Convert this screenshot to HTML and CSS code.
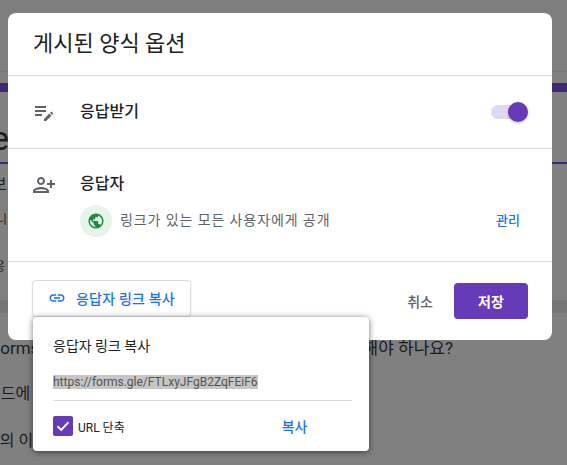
FILE: index.html
```html
<!DOCTYPE html>
<html lang="ko">
<head>
<meta charset="UTF-8">
<meta name="viewport" content="width=device-width, initial-scale=1.0">
<title>게시된 양식 옵션</title>
<link rel="stylesheet" href="styles.css">
</head>
<body>

<!-- page behind the scrim, mostly covered -->
<div class="page">
    <div class="page-header"></div>
    <div class="page-accent"></div>
    <div class="page-title">e</div>
    <div class="page-rule"></div>
    <div class="page-tab">보</div>
    <div class="page-note">니</div>
    <div class="page-small">응</div>
    <div class="page-band"></div>
    <p class="question"><span>Forms</span><span>해야 하나요?</span></p>
    <p class="answer">필드에</p>
    <p class="answer answer-last">사의 이</p>
</div>

<div class="dialog">
    <h2 class="dialog-title">게시된 양식 옵션</h2>

    <div class="row row-accept">
        <svg class="row-icon" viewBox="0 0 24 24"><path d="M3 10h11v2H3zM3 8h11V6H3zM3 16h7v-2H3zM18.01 12.87l.71-.71c.39-.39 1.02-.39 1.41 0l.71.71c.39.39.39 1.02 0 1.41l-.71.71-2.12-2.12zM17.3 13.58l-5.3 5.3V21h2.12l5.3-5.3-2.12-2.12z"/></svg>
        <span class="row-label">응답받기</span>
        <div class="switch"><div class="switch-thumb"></div></div>
    </div>

    <div class="row row-people">
        <svg class="row-icon icon-flip" viewBox="0 0 24 24"><path d="M15 12c2.21 0 4-1.79 4-4s-1.79-4-4-4-4 1.79-4 4 1.79 4 4 4zm0-6c1.1 0 2 .9 2 2s-.9 2-2 2-2-.9-2-2 .9-2 2-2zm0 8c-2.67 0-8 1.34-8 4v2h16v-2c0-2.66-5.33-4-8-4zm-6 4c.22-.65 2.56-1.7 6-1.7 3.45 0 5.78 1.05 6 1.7H9zM6 15v-3h3v-2H6V7H4v3H1v2h3v3z"/></svg>
        <div class="people-body">
            <span class="row-label">응답자</span>
            <div class="access">
                <div class="globe">
                    <svg viewBox="0 0 24 24"><path d="M12 2C6.48 2 2 6.48 2 12s4.48 10 10 10 10-4.48 10-10S17.52 2 12 2zm-1 17.93c-3.95-.49-7-3.85-7-7.93 0-.62.08-1.21.21-1.79L9 15v1c0 1.1.9 2 2 2v1.93zm6.9-2.54c-.26-.81-1-1.39-1.9-1.39h-1v-3c0-.55-.45-1-1-1H8v-2h2c.55 0 1-.45 1-1V7h2c1.1 0 2-.9 2-2v-.41c2.93 1.19 5 4.06 5 7.41 0 2.08-.8 3.97-2.1 5.39z"/></svg>
                </div>
                <span class="access-text">링크가 있는 모든 사용자에게 공개</span>
                <span class="manage">관리</span>
            </div>
        </div>
    </div>

    <div class="dialog-footer">
        <button class="link-btn">
            <svg viewBox="0 0 24 24"><path d="M3.9 12c0-1.71 1.39-3.1 3.1-3.1h4V7H7c-2.76 0-5 2.24-5 5s2.24 5 5 5h4v-1.9H7c-1.71 0-3.1-1.39-3.1-3.1zM8 13h8v-2H8v2zm9-6h-4v1.9h4c1.71 0 3.1 1.39 3.1 3.1s-1.39 3.1-3.1 3.1h-4V17h4c2.76 0 5-2.24 5-5s-2.24-5-5-5z"/></svg>
            응답자 링크 복사
        </button>
        <button class="cancel-btn">취소</button>
        <button class="save-btn">저장</button>
    </div>
</div>

<div class="popup">
    <div class="popup-title">응답자 링크 복사</div>
    <div class="popup-url"><span class="url-text">https://forms.gle/FTLxyJFgB2ZqFEiF6</span></div>
    <div class="popup-actions">
        <div class="checkbox">
            <svg viewBox="0 0 20 20"><path d="M4.5 10.2l3.7 3.7 7.3-7.6" fill="none" stroke="#fff" stroke-width="2"/></svg>
        </div>
        <span class="checkbox-label">URL 단축</span>
        <span class="copy">복사</span>
    </div>
</div>

</body>
</html>
```

FILE: styles.css
```css
* {
    box-sizing: border-box;
}

body {
    margin: 0;
    width: 567px;
    height: 465px;
    overflow: hidden;
    position: relative;
    font-family: Roboto, "Noto Sans CJK KR", sans-serif;
    background-color: #808080;
}

/* page behind the scrim */
.page {
    height: 465px;
    overflow: hidden;
    color: #1c1c1c;
}

.page-header {
    height: 72px;
    background-color: #7e7e7e;
    border-bottom: 1px solid #757575;
}

.page-accent {
    height: 9px;
    margin-top: 11px;
    background-color: #3e2a74;
}

.page-title {
    height: 70px;
    margin-left: -9px;
    font-size: 34px;
    line-height: 92px;
}

.page-rule {
    height: 2px;
    background-color: #392a78;
}

.page-tab {
    height: 34px;
    margin-left: -8px;
    font-size: 16px;
    line-height: 42px;
}

.page-note {
    height: 44px;
    margin-left: -4px;
    font-size: 12px;
    line-height: 44px;
}

.page-small {
    height: 58px;
    margin-left: -6px;
    font-size: 12px;
    line-height: 50px;
}

.page-band {
    height: 13px;
    background-color: #757575;
}

.question {
    display: flex;
    justify-content: space-between;
    width: 462px;
    margin: 23px 0 0 -9px;
    font-size: 17px;
    line-height: 24px;
}

.answer {
    margin: 22px 0 0 -14px;
    font-size: 16px;
    line-height: 24px;
}

.answer-last {
    margin-top: 23px;
    margin-left: -15px;
}

/* main dialog */
.dialog {
    position: absolute;
    top: 13px;
    left: 8px;
    width: 544px;
    height: 327px;
    background-color: #fff;
    border-radius: 8px;
    color: #202124;
}

.dialog-title {
    margin: 0;
    height: 63px;
    padding: 0 25px;
    font-size: 22px;
    font-weight: 400;
    line-height: 62px;
    border-bottom: 1px solid #dadce0;
}

.row {
    display: flex;
    padding: 0 24px;
    border-bottom: 1px solid #dadce0;
}

.row-accept {
    height: 73px;
    align-items: center;
}

.row-people {
    height: 113px;
    padding-top: 24px;
}

.row-icon {
    width: 24px;
    height: 24px;
    margin-right: 24px;
    flex-shrink: 0;
    fill: #5f6368;
}

.icon-flip {
    transform: scaleX(-1);
}

.row-label {
    font-size: 16px;
    font-weight: 500;
    line-height: 22px;
}

.switch {
    position: relative;
    width: 30px;
    height: 14px;
    margin-left: auto;
    margin-right: 7px;
    background-color: #e1d8f1;
    border-radius: 7px;
}

.switch-thumb {
    position: absolute;
    top: -3px;
    right: -7px;
    width: 20px;
    height: 20px;
    background-color: #673ab7;
    border-radius: 50%;
    box-shadow: 0 1px 3px rgba(0, 0, 0, 0.25);
}

.people-body {
    flex: 1;
}

.access {
    display: flex;
    align-items: center;
    height: 32px;
    margin-top: 10px;
    padding-right: 8px;
    line-height: 31px;
}

.globe {
    display: flex;
    align-items: center;
    justify-content: center;
    width: 32px;
    height: 32px;
    margin-right: 8px;
    background-color: #e6f4ea;
    border-radius: 50%;
}

.globe svg {
    width: 18px;
    height: 18px;
    fill: #1e8e3e;
}

.access-text {
    height: 32px;
    font-size: 14px;
    letter-spacing: 0.9px;
    color: #5f6368;
}

.manage {
    height: 32px;
    margin-left: auto;
    font-size: 13px;
    font-weight: 500;
    color: #1a73e8;
}

.dialog-footer {
    display: flex;
    align-items: center;
    height: 78px;
    padding: 0 24px;
}

.dialog-footer button {
    font-family: inherit;
    font-size: 14px;
    font-weight: 500;
    cursor: pointer;
}

.link-btn {
    display: flex;
    align-items: center;
    gap: 10px;
    width: 159px;
    height: 37px;
    margin-bottom: 6px;
    padding: 0 0 0 15px;
    background-color: #fff;
    color: #1a73e8;
    border: 1px solid #dadce0;
    border-radius: 4px;
    letter-spacing: 0.2px;
    box-shadow: 0 1px 2px rgba(0, 0, 0, 0.1);
}

.link-btn svg {
    width: 18px;
    height: 18px;
    fill: #1a73e8;
}

.cancel-btn {
    margin-left: auto;
    margin-right: 21px;
    padding: 0;
    background: none;
    border: none;
    color: #5f6368;
}

.dialog-footer .save-btn {
    width: 74px;
    height: 36px;
    background-color: #673ab7;
    color: #fff;
    font-weight: 700;
    border: none;
    border-radius: 4px;
}

/* copy link popup */
.popup {
    position: absolute;
    top: 317px;
    left: 33px;
    width: 336px;
    height: 134px;
    padding: 0 17px 0 20px;
    background-color: #fff;
    border-radius: 4px;
    box-shadow: 0 1px 6px rgba(0, 0, 0, 0.55);
    color: #202124;
}

.popup-title {
    padding-top: 19px;
    font-size: 14px;
    line-height: 20px;
}

.popup-url {
    height: 33px;
    margin-top: 12px;
    padding-top: 7px;
    border-bottom: 1px solid #dadce0;
    font-size: 12px;
    line-height: 15px;
}

.url-text {
    background-color: #c6c6c6;
    color: #555;
}

.popup-actions {
    display: flex;
    align-items: center;
    margin-top: 15px;
}

.checkbox {
    width: 20px;
    height: 20px;
    background-color: #673ab7;
    border-radius: 2px;
}

.checkbox svg {
    display: block;
}

.checkbox-label {
    margin-left: 5px;
    font-size: 12px;
}

.copy {
    margin-left: 157px;
    font-size: 14px;
    font-weight: 500;
    color: #1a73e8;
}
```
